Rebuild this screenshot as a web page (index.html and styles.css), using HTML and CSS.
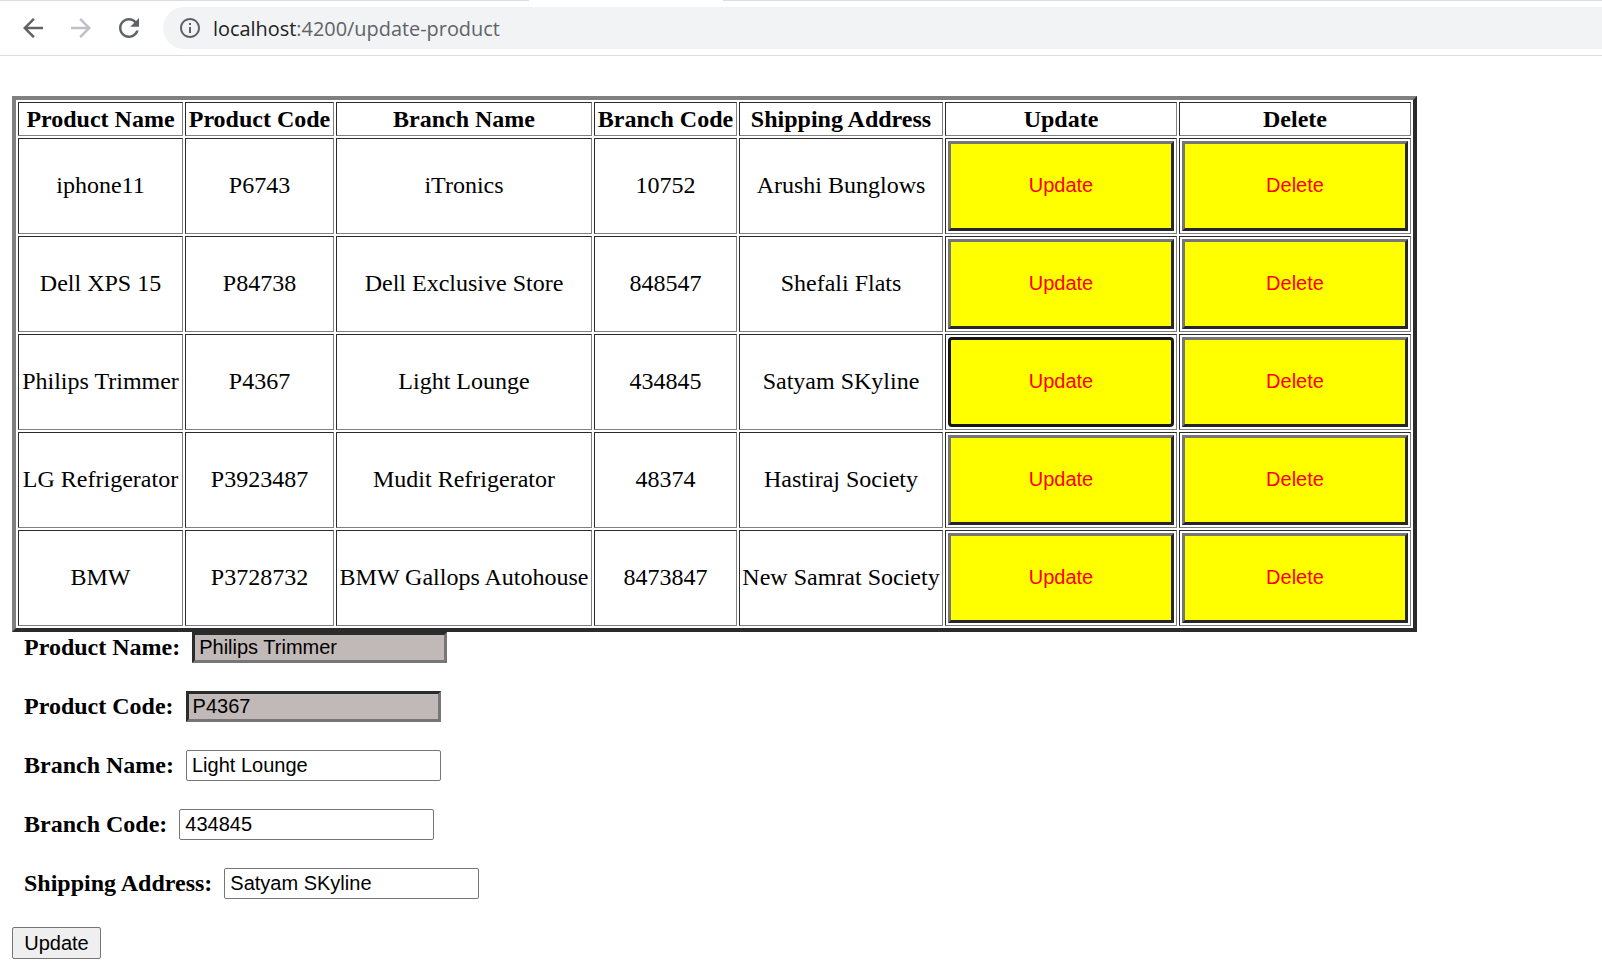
FILE: index.html
```html
<!DOCTYPE html>
<html>
<head>
<meta charset="utf-8">
<title>UpdateProduct</title>
<link rel="stylesheet" href="styles.css">
</head>
<body>
<div class="tabline"><div class="tl-a"></div><div class="tl-gap"></div><div class="tl-b"></div></div>
<header class="toolbar">
  <svg class="nav-icon back" viewBox="0 0 24 24"><path d="M20 11H7.83l5.59-5.59L12 4l-8 8 8 8 1.41-1.41L7.83 13H20v-2z"/></svg>
  <svg class="nav-icon fwd" viewBox="0 0 24 24"><path d="M12 4l-1.41 1.41L16.17 11H4v2h12.17l-5.58 5.59L12 20l8-8z"/></svg>
  <svg class="nav-icon reload" viewBox="0 0 24 24"><path d="M17.65 6.35C16.2 4.9 14.21 4 12 4c-4.42 0-7.99 3.58-7.99 8s3.57 8 7.99 8c3.73 0 6.84-2.55 7.73-6h-2.08c-.82 2.33-3.04 4-5.65 4-3.31 0-6-2.69-6-6s2.69-6 6-6c1.66 0 3.14.69 4.22 1.78L13 11h7V4l-2.35 2.35z"/></svg>
  <div class="omnibox">
    <svg class="info-icon" viewBox="0 0 24 24"><path d="M11 7h2v2h-2zm0 4h2v6h-2zm1-9C6.48 2 2 6.48 2 12s4.48 10 10 10 10-4.48 10-10S17.52 2 12 2zm0 18c-4.41 0-8-3.59-8-8s3.59-8 8-8 8 3.59 8 8-3.59 8-8 8z"/></svg>
    <span class="url"><span class="host">localhost</span>:4200/update-product</span>
  </div>
</header>
<main class="page">
  <table class="products">
    <thead>
      <tr>
        <th class="c1">Product Name</th>
        <th class="c2">Product Code</th>
        <th class="c3">Branch Name</th>
        <th class="c4">Branch Code</th>
        <th class="c5">Shipping Address</th>
        <th class="c6">Update</th>
        <th class="c7">Delete</th>
      </tr>
    </thead>
    <tbody>
      <tr>
        <td>iphone11</td><td>P6743</td><td>iTronics</td><td>10752</td><td>Arushi Bunglows</td>
        <td class="btn-cell"><button class="act">Update</button></td>
        <td class="btn-cell"><button class="act">Delete</button></td>
      </tr>
      <tr>
        <td>Dell XPS 15</td><td>P84738</td><td>Dell Exclusive Store</td><td>848547</td><td>Shefali Flats</td>
        <td class="btn-cell"><button class="act">Update</button></td>
        <td class="btn-cell"><button class="act">Delete</button></td>
      </tr>
      <tr>
        <td>Philips Trimmer</td><td>P4367</td><td>Light Lounge</td><td>434845</td><td>Satyam SKyline</td>
        <td class="btn-cell"><button class="act focused">Update</button></td>
        <td class="btn-cell"><button class="act">Delete</button></td>
      </tr>
      <tr>
        <td>LG Refrigerator</td><td>P3923487</td><td>Mudit Refrigerator</td><td>48374</td><td>Hastiraj Society</td>
        <td class="btn-cell"><button class="act">Update</button></td>
        <td class="btn-cell"><button class="act">Delete</button></td>
      </tr>
      <tr>
        <td>BMW</td><td>P3728732</td><td>BMW Gallops Autohouse</td><td>8473847</td><td>New Samrat Society</td>
        <td class="btn-cell"><button class="act">Update</button></td>
        <td class="btn-cell"><button class="act">Delete</button></td>
      </tr>
    </tbody>
  </table>

  <form class="edit-form">
    <div class="form-row"><label class="lbl">Product Name:</label><input class="field readonly" type="text" value="Philips Trimmer" readonly></div>
    <div class="form-row"><label class="lbl">Product Code:</label><input class="field readonly" type="text" value="P4367" readonly></div>
    <div class="form-row"><label class="lbl">Branch Name:</label><input class="field" type="text" value="Light Lounge"></div>
    <div class="form-row"><label class="lbl">Branch Code:</label><input class="field" type="text" value="434845"></div>
    <div class="form-row"><label class="lbl">Shipping Address:</label><input class="field" type="text" value="Satyam SKyline"></div>
    <button class="submit" type="button">Update</button>
  </form>
</main>
</body>
</html>
```
FILE: styles.css
```css
html, body {
  margin: 0;
  padding: 0;
  background: #ffffff;
}
body {
  font-family: "Liberation Serif", "Times New Roman", serif;
  width: 1602px;
  height: 970px;
  overflow: hidden;
}

/* browser chrome */
.tabline {
  display: flex;
  height: 1px;
}
.tl-a { width: 529px; background: #dadce0; }
.tl-gap { width: 194px; }
.tl-b { flex: 1; background: #dadce0; }

.toolbar {
  border-bottom: 1px solid #dadce0;
  display: flex;
  align-items: center;
  box-sizing: border-box;
  height: 56px;
  margin-top: -1px;
  padding-top: 1px;
}
.nav-icon {
  width: 30px;
  height: 30px;
  fill: #5f6368;
  flex: none;
}
.back { margin-left: 18px; }
.fwd { margin-left: 18px; fill: #bdc1c6; }
.reload { margin-left: 18px; }
.omnibox {
  margin-left: 19px;
  flex: 1;
  height: 42px;
  background: #f1f3f4;
  border-radius: 21px 0 0 21px;
  display: flex;
  align-items: center;
}
.info-icon {
  width: 24px;
  height: 24px;
  fill: #5f6368;
  margin-left: 15px;
  flex: none;
}
.url {
  margin-left: 11px;
  font-family: "Open Sans", "Noto Sans", sans-serif;
  font-size: 19.9px;
  color: #5f6368;
}
.host { color: #202124; }

/* page */
.page {
  padding: 40px 0 0 12px;
}

.products {
  border: 4px solid;
  border-color: #808080 #2b2b2b #2b2b2b #808080;
  border-spacing: 2px;
  table-layout: fixed;
  width: 1405px;
  font-size: 24px;
}
.products th,
.products td {
  border: 1px solid;
  border-color: #2b2b2b #808080 #808080 #2b2b2b;
  padding: 1px;
  text-align: center;
  white-space: nowrap;
  box-sizing: border-box;
}
.products th { font-weight: bold; height: 34px; padding-top: 2px; }
.products td { height: 96px; padding-bottom: 2px; }
.c1 { width: 165px; }
.c2 { width: 149px; }
.c3 { width: 256px; }
.c4 { width: 143px; }
.c5 { width: 204px; }
.c6 { width: 232px; }
.c7 { width: 232px; }

.products td.btn-cell { padding: 2px; }
.act {
  display: block;
  width: 226px;
  height: 90px;
  margin: 0;
  background: #ffff00;
  color: #ff0000;
  font-family: "Liberation Sans", Arial, sans-serif;
  font-size: 20px;
  border: 3px solid;
  border-color: #767676 #262626 #262626 #767676;
  padding: 0 0 2px;
}
.act.focused {
  border: 3px solid #161616;
  border-radius: 4px;
}

/* form */
.edit-form {
  margin: 0;
}
.form-row {
  display: flex;
  align-items: center;
  height: 31px;
  margin-bottom: 28px;
}
.lbl {
  font-weight: bold;
  font-size: 24px;
  padding: 0 12px;
  color: #000;
}
.field {
  box-sizing: border-box;
  width: 255px;
  height: 31px;
  margin: 0;
  padding: 0 5px;
  font-family: "Liberation Sans", Arial, sans-serif;
  font-size: 20px;
  color: #000;
  border: 1px solid #767676;
  border-radius: 2px;
  background: #fff;
}
.field.readonly {
  background: #c1b8b8;
  border: 3px solid;
  border-color: #2b2b2b #767676 #767676 #2b2b2b;
  border-radius: 0;
  padding: 0 4px;
}
.submit {
  display: block;
  width: 89px;
  height: 32px;
  margin: 0;
  padding: 0;
  font-family: "Liberation Sans", Arial, sans-serif;
  font-size: 20px;
  color: #000;
  background: #efefef;
  border: 1px solid #767676;
  border-radius: 2px;
}
```
